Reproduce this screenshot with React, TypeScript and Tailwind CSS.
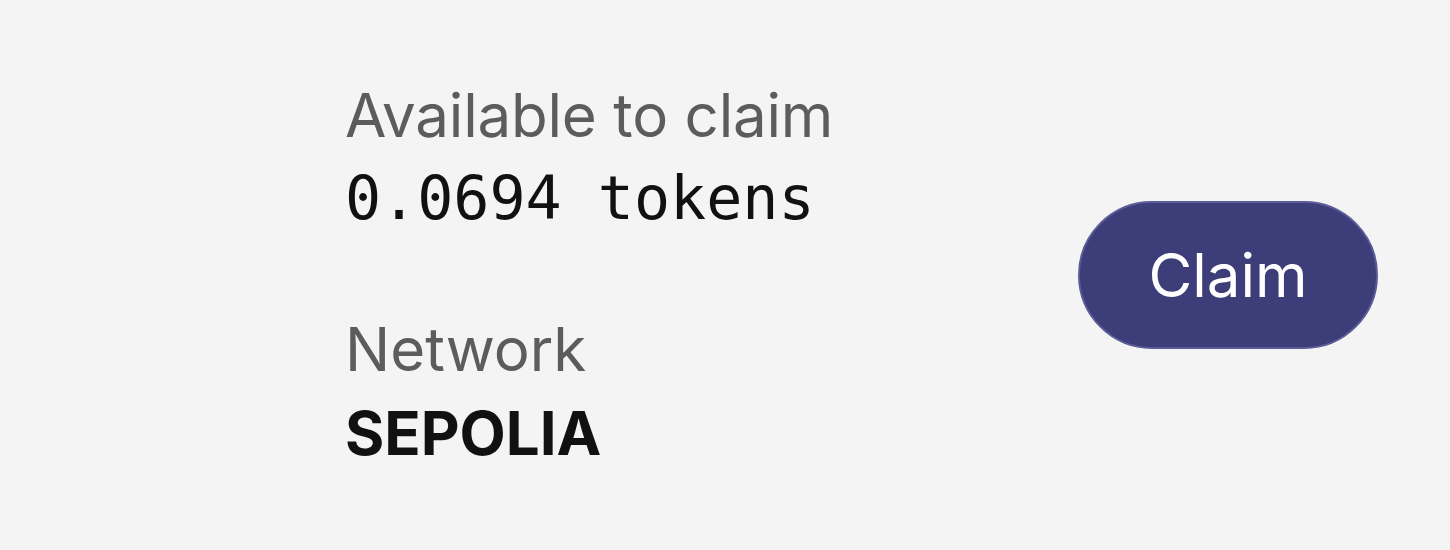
export default function App() {
  return (
    <div className="w-[1450px] h-[550px] bg-[#f4f4f4] flex items-center justify-between pl-[345px] pr-[72px]" style={{ fontFamily: 'Inter, "Noto Sans", sans-serif' }}>
      <div className="flex flex-col gap-[68px] pt-[2px]">
        <div className="flex flex-col">
          <div className="text-[60px] leading-[80px] tracking-[-0.2px] text-[#5c5c5c]">Available to claim</div>
          <div className="text-[60px] leading-[86px] text-[#111111]" style={{ fontFamily: '"DejaVu Sans Mono", monospace' }}>0.0694 tokens</div>
        </div>
        <div className="flex flex-col">
          <div className="text-[60px] leading-[80px] text-[#5c5c5c]">Network</div>
          <div className="text-[60px] leading-[88px] font-bold text-[#111111]">SEPOLIA</div>
        </div>
      </div>
      <button className="w-[300px] h-[148px] rounded-full bg-[#3d3d7a] border-2 border-[#5b5b98] text-white text-[60px] leading-none">Claim</button>
    </div>
  );
}
